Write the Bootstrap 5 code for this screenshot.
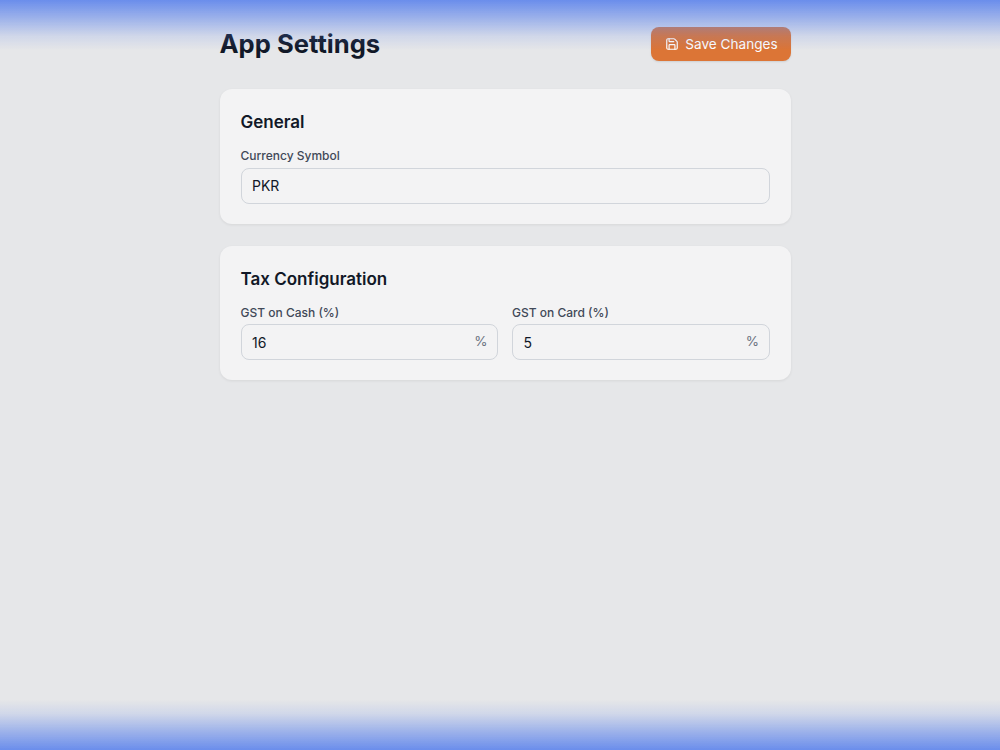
<!DOCTYPE html>
<html lang="en">
<head>
<meta charset="utf-8">
<title>App Settings</title>
<link href="https://cdn.jsdelivr.net/npm/bootstrap@5.3.0/dist/css/bootstrap.min.css" rel="stylesheet">
<style>
html, body { height: 100%; }
body { background: #e6e7e9; font-family: Inter, "Liberation Sans", sans-serif; color: #111827; }
.edge-glow { position: fixed; left: 0; right: 0; height: 50px; pointer-events: none; z-index: 5; }
.edge-top { top: 0; background: linear-gradient(to bottom, rgba(99,136,235,.95), rgba(99,136,235,.52) 40%, rgba(99,136,235,.17) 72%, rgba(99,136,235,0)); }
.edge-bottom { bottom: 0; background: linear-gradient(to top, rgba(99,136,235,.95), rgba(99,136,235,.52) 40%, rgba(99,136,235,.17) 72%, rgba(99,136,235,0)); }
.settings-wrap { width: 571px; margin-left: 219.5px; padding-top: 26px; }
.top-bar { margin-bottom: 27px; }
.page-title { font-size: 25.6px; font-weight: 700; line-height: 36px; margin: 0; }
.save-btn { background: #dc7536; border: 0; color: #fff; border-radius: 8px; height: 34px; width: 140px; font-size: 13.6px; font-weight: 400; padding: 0 0 0 2px; gap: 6px; box-shadow: 0 1px 2px rgba(0,0,0,.1); }
.save-btn:hover { background: #d0682a; color: #fff; }
.panel { background: #f3f3f4; border-radius: 12px; padding: 21px 21px 20px; box-shadow: 0 1px 3px rgba(0,0,0,.07); }
.panel + .panel { margin-top: 22px; }
.panel-title { font-size: 17px; font-weight: 600; line-height: 24px; margin: 0 0 13px; }
.field-label { font-size: 12px; font-weight: 500; color: #414958; line-height: 18px; margin-bottom: 2.5px; display: block; }
.field-input { background: transparent; border: 1px solid #d1d5db; border-radius: 8px; height: 36px; font-size: 14px; color: #111827; padding: 0 10.5px; box-shadow: none; }
.field-input:focus { background: transparent; border-color: #6388eb; box-shadow: none; }
.suffix-box { position: relative; }
.suffix-sign { position: absolute; right: 10.5px; top: 6.5px; font-size: 13.5px; color: #6b7280; line-height: 20px; }
.tax-row { gap: 14px; }
</style>
</head>
<body>
<div class="edge-glow edge-top"></div>
<div class="edge-glow edge-bottom"></div>
<main class="settings-wrap">
  <header class="d-flex justify-content-between align-items-center top-bar">
    <h1 class="page-title">App Settings</h1>
    <button type="button" class="btn save-btn d-flex align-items-center justify-content-center">
      <svg width="14" height="14" viewBox="0 0 24 24" fill="none" stroke="currentColor" stroke-width="2" stroke-linecap="round" stroke-linejoin="round" aria-hidden="true"><path d="M15.2 3a2 2 0 0 1 1.4.6l3.8 3.8a2 2 0 0 1 .6 1.4V19a2 2 0 0 1-2 2H5a2 2 0 0 1-2-2V5a2 2 0 0 1 2-2z"/><path d="M17 21v-7a1 1 0 0 0-1-1H8a1 1 0 0 0-1 1v7"/><path d="M7 3v4a1 1 0 0 0 1 1h7"/></svg>
      Save Changes
    </button>
  </header>

  <section class="panel">
    <h2 class="panel-title">General</h2>
    <label class="field-label" for="cur">Currency Symbol</label>
    <input id="cur" class="form-control field-input" value="PKR">
  </section>

  <section class="panel">
    <h2 class="panel-title">Tax Configuration</h2>
    <div class="d-flex tax-row">
      <div class="flex-fill w-50">
        <label class="field-label" for="cash">GST on Cash (%)</label>
        <div class="suffix-box">
          <input id="cash" class="form-control field-input" value="16">
          <span class="suffix-sign">%</span>
        </div>
      </div>
      <div class="flex-fill w-50">
        <label class="field-label" for="card">GST on Card (%)</label>
        <div class="suffix-box">
          <input id="card" class="form-control field-input" value="5">
          <span class="suffix-sign">%</span>
        </div>
      </div>
    </div>
  </section>
</main>
<script src="https://cdn.jsdelivr.net/npm/bootstrap@5.3.0/dist/js/bootstrap.bundle.min.js"></script>
</body>
</html>
